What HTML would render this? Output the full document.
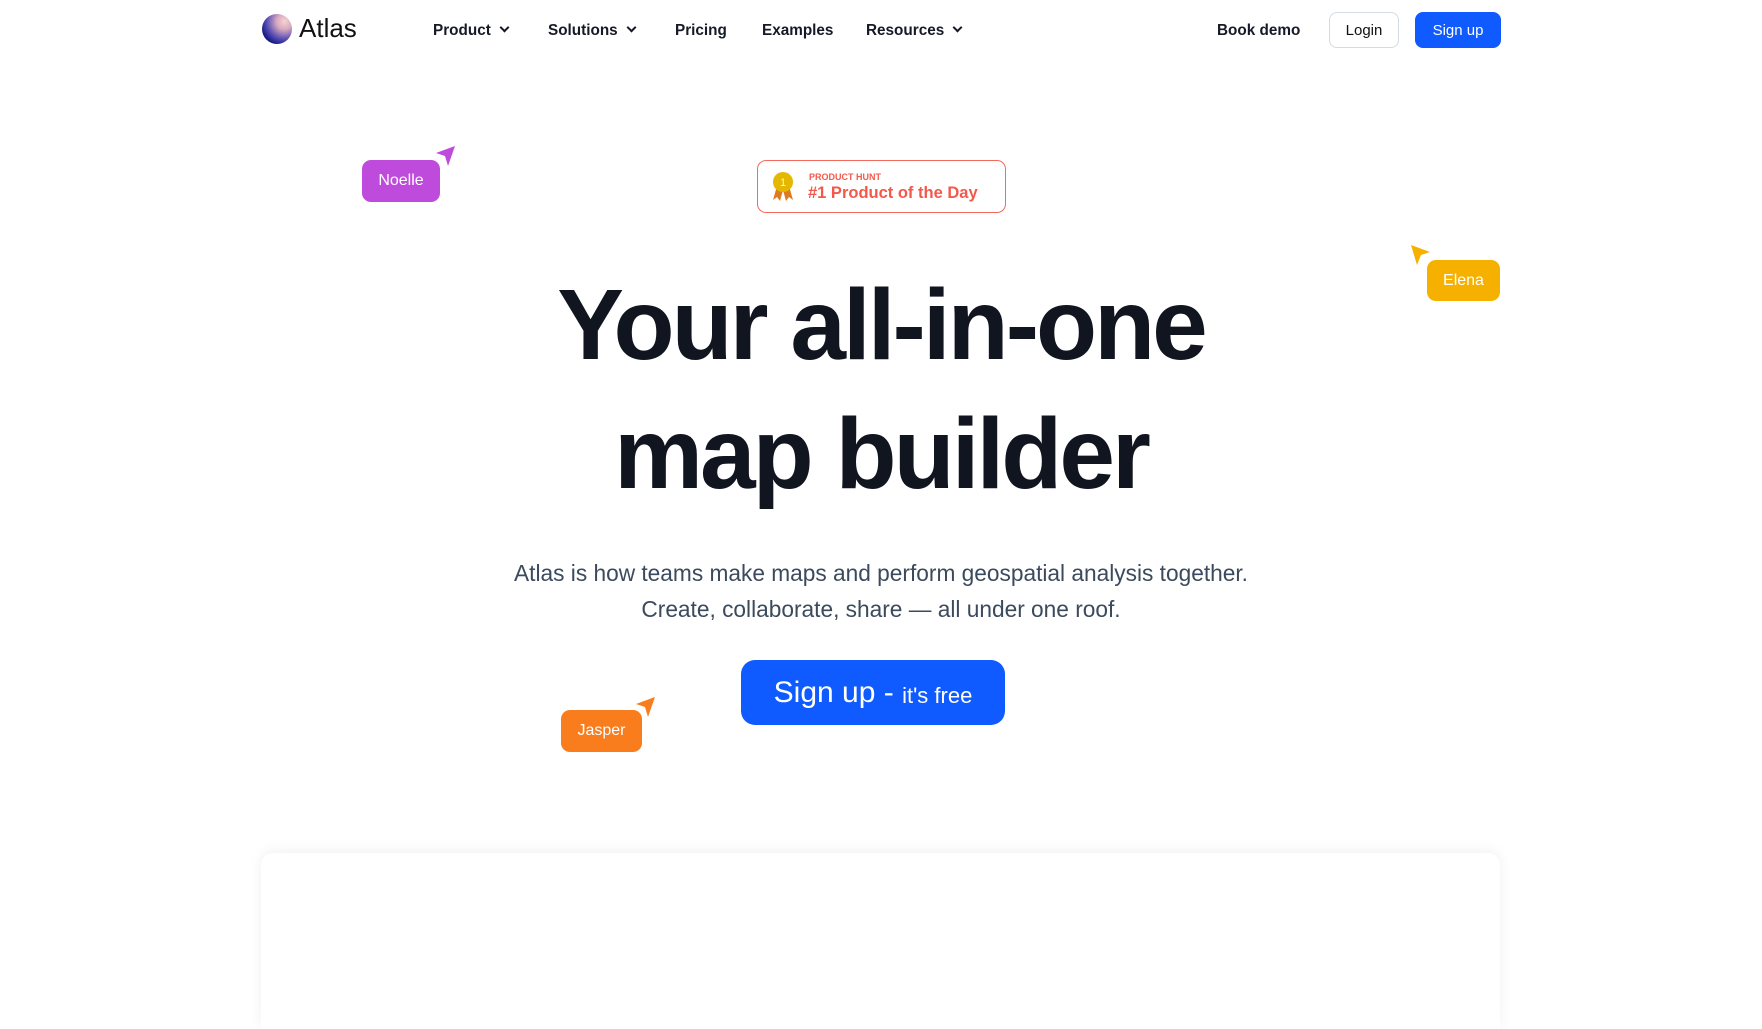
<!DOCTYPE html>
<html><head><meta charset="utf-8"><style>
*{margin:0;padding:0;box-sizing:border-box}
html,body{width:1762px;height:1029px;overflow:hidden}
body{background:#fff;font-family:"Liberation Sans",Arial,sans-serif;position:relative;color:#111827}
.abs{position:absolute}
.nav{font-size:15.3px;font-weight:700;color:#151a26;top:22px;white-space:nowrap}
.chev{display:inline-block;width:7px;height:7px;border-right:2px solid #151a26;border-bottom:2px solid #151a26;transform:rotate(45deg);margin-left:10px;position:relative;top:-4px}
.pill{color:#fff;font-size:16px;border-radius:9px;display:flex;align-items:center;justify-content:center}
h1{position:absolute;left:0;width:1762px;text-align:center;font-size:100px;font-weight:700;letter-spacing:-3px;color:#111520}
</style></head><body>
<div class="abs" style="left:262px;top:14px;width:30px;height:30px;border-radius:50%;background:radial-gradient(circle at 75% 25%,#f6d3cf 0%,#d8a9c0 25%,#5a4fb5 55%,#1a1f8a 75%,#0d1050 100%)"></div>
<div class="abs" style="left:299px;top:13px;font-size:26px;color:#111">Atlas</div>
<div class="abs nav" style="left:433px">Product<span class="chev"></span></div>
<div class="abs nav" style="left:548px">Solutions<span class="chev"></span></div>
<div class="abs nav" style="left:675px">Pricing</div>
<div class="abs nav" style="left:762px">Examples</div>
<div class="abs nav" style="left:866px">Resources<span class="chev"></span></div>
<div class="abs nav" style="left:1217px">Book demo</div>
<div class="abs" style="left:1329px;top:12px;width:70px;height:36px;border:1px solid #d5dbe3;border-radius:8px;font-size:15px;display:flex;align-items:center;justify-content:center;color:#111">Login</div>
<div class="abs" style="left:1415px;top:12px;width:86px;height:36px;background:#0f5bff;border-radius:8px;font-size:15px;display:flex;align-items:center;justify-content:center;color:#fff">Sign up</div>

<div class="abs pill" style="left:362px;top:160px;width:78px;height:42px;background:#bf4bdc">Noelle</div>
<svg class="abs" style="left:434px;top:144px" width="24" height="24" viewBox="0 0 24 24"><path d="M21 2 L2 9 L11 12 L14 22 Z" fill="#bf4bdc"/></svg>

<div class="abs" style="left:757px;top:160px;width:249px;height:53px;border:1.5px solid #f46a5c;border-radius:9px"></div>
<svg class="abs" style="left:770px;top:170px" width="26" height="34" viewBox="0 0 26 34"><path d="M7 16 L3 30 L7 27 L10 31 L13 20 Z M19 16 L23 30 L19 27 L16 31 L13 20 Z" fill="#e07a1f"/><circle cx="13" cy="12" r="10" fill="#e4b800"/><text x="13" y="16" font-size="11" text-anchor="middle" fill="#fff8c0" font-family="Liberation Sans">1</text></svg>
<div class="abs" style="left:809px;top:172px;font-size:9px;font-weight:700;color:#f2594b">PRODUCT HUNT</div>
<div class="abs" style="left:808px;top:184px;font-size:16.5px;font-weight:700;color:#f2594b">#1 Product of the Day</div>

<div class="abs pill" style="left:1427px;top:260px;width:73px;height:41px;background:#f6b100">Elena</div>
<svg class="abs" style="left:1409px;top:243px" width="24" height="24" viewBox="0 0 24 24"><path d="M2 2 L21 9 L12 12 L8 22 Z" fill="#f6b100"/></svg>

<h1 style="top:260px;line-height:130px">Your all-in-one</h1>
<h1 style="top:389px;line-height:130px">map builder</h1>

<div class="abs" style="left:0;width:1762px;top:555px;text-align:center;font-size:22.7px;line-height:36px;color:#3b4a5c">Atlas is how teams make maps and perform geospatial analysis together.<br>Create, collaborate, share — all under one roof.</div>

<div class="abs" style="left:741px;top:660px;width:264px;height:65px;background:#0f5bff;border-radius:14px;color:#fff;display:flex;align-items:center;justify-content:center;font-size:30px">Sign up&nbsp;-&nbsp;<span style="font-size:22px;position:relative;top:3px">it's free</span></div>

<div class="abs pill" style="left:561px;top:710px;width:81px;height:42px;background:#f97d1c">Jasper</div>
<svg class="abs" style="left:634px;top:695px" width="24" height="24" viewBox="0 0 24 24"><path d="M21 2 L2 9 L11 12 L14 22 Z" fill="#f97d1c"/></svg>

<div class="abs" style="left:261px;top:853px;width:1239px;height:176px;border-radius:12px 12px 0 0;background:#fff;box-shadow:0 -2px 14px rgba(0,0,0,0.06)"></div>
</body></html>
